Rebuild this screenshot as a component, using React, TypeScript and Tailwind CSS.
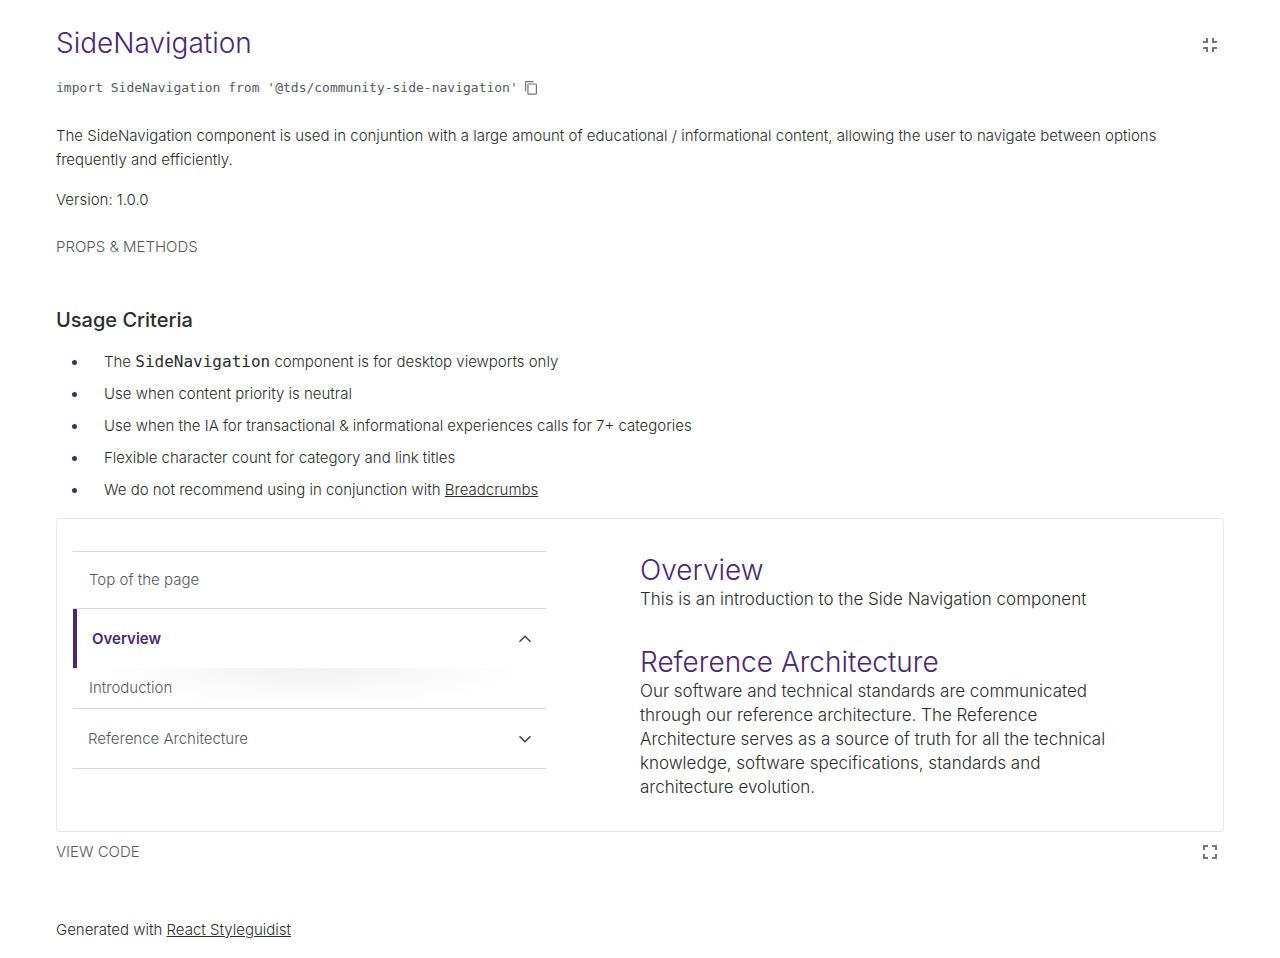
import { useState } from "react";

const criteria = [
  "Use when content priority is neutral",
  "Use when the IA for transactional & informational experiences calls for 7+ categories",
  "Flexible character count for category and link titles",
];

function Chevron({ up }: { up: boolean }) {
  return (
    <svg width="12" height="8" viewBox="0 0 12 8" fill="none" stroke="#4b286d" strokeWidth="1.4" aria-hidden="true">
      <path d={up ? "M0.5 6.8 6 1.3l5.5 5.5" : "M0.5 1.2 6 6.7l5.5-5.5"} />
    </svg>
  );
}

function Bullet({ children }: { children: React.ReactNode }) {
  return (
    <li className="flex items-center gap-[27px] pl-4">
      <span className="size-[5px] shrink-0 rounded-full bg-[#4b286d]" />
      <span>{children}</span>
    </li>
  );
}

function SideNav() {
  const [open, setOpen] = useState(true);
  return (
    <nav aria-label="Side navigation" className="col-span-5 self-start border-b border-[#d8d8d8] text-[#54595f]">
      <a href="#top" className="block border-t border-[#d8d8d8] px-4 py-4">
        Top of the page
      </a>
      <button
        type="button"
        aria-expanded={open}
        onClick={() => setOpen(!open)}
        className="flex h-[60px] w-full items-center justify-between border-t border-[#d8d8d8] text-left font-semibold text-[#4b286d]"
      >
        <span className="flex h-full items-center border-l-4 border-[#4b286d] pl-[15px]">Overview</span>
        <span className="pr-[15px]">
          <Chevron up={open} />
        </span>
      </button>
      {open && (
        <a
          href="#introduction"
          className="block bg-[radial-gradient(ellipse_45%_95%_at_50%_0%,#f1f1f1,#ffffff)] px-4 py-2"
        >
          Introduction
        </a>
      )}
      <button
        type="button"
        aria-expanded="false"
        className="flex h-[60px] w-full items-center justify-between border-t border-[#d8d8d8] px-[15px] text-left"
      >
        Reference Architecture
        <Chevron up={false} />
      </button>
    </nav>
  );
}

export default function App() {
  return (
    <main className="px-14 pt-6 pb-4 font-['Inter',sans-serif] text-[15px] leading-6 font-light text-[#2a2c2e]">
      <header className="flex items-center justify-between">
        <h1 className="pb-0.5 text-[28px] leading-[38px] text-[#4b286d]">SideNavigation</h1>
        <button type="button" aria-label="Show all components" className="mt-0.5 mr-[7px]">
          <svg width="14" height="14" viewBox="0 0 14 14" fill="none" stroke="#757575" strokeWidth="2" aria-hidden="true">
            <path d="M4 0v4H0M10 0v4h4M0 10h4v4M14 10h-4v4" />
          </svg>
        </button>
      </header>
      <div className="mt-3 flex items-center gap-[7px] font-['DejaVu_Sans_Mono',monospace] text-[13px] font-normal text-[#54595f]">
        <span>import SideNavigation from '@tds/community-side-navigation'</span>
        <button type="button" aria-label="Copy import">
          <svg width="12" height="14" viewBox="0 0 12 14" fill="none" stroke="#757575" strokeWidth="1.2" aria-hidden="true">
            <path d="M0.6 10.3V1.4Q.6.6 1.4.6H8.5" />
            <rect x="2.9" y="3" width="8.5" height="10.2" rx="0.7" />
          </svg>
        </button>
      </div>

      <p className="mt-6">
        The SideNavigation component is used in conjuntion with a large amount of educational / informational content,
        allowing the user to navigate between options frequently and efficiently.
      </p>
      <p className="mt-4">Version: 1.0.0</p>
      <button type="button" className="mt-[23px] block text-[#54595f]">
        PROPS &amp; METHODS
      </button>

      <h2 className="mt-[47px] text-xl leading-7 font-medium">Usage Criteria</h2>
      <ul className="mt-4 flex flex-col gap-2">
        <Bullet>
          The <code className="font-['DejaVu_Sans_Mono',monospace] text-base leading-6 font-normal">SideNavigation</code>{" "}
          component is for desktop viewports only
        </Bullet>
        {criteria.map((text) => (
          <Bullet key={text}>{text}</Bullet>
        ))}
        <Bullet>
          We do not recommend using in conjunction with{" "}
          <a href="#breadcrumbs" className="underline">
            Breadcrumbs
          </a>
        </Bullet>
      </ul>

      <section className="mt-4 grid grid-cols-12 rounded-[3px] border border-[#e8e8e8] px-4 py-8">
        <SideNav />
        <div className="col-span-5 col-start-7 flex flex-col gap-8 text-[17px] leading-6">
          <article>
            <h3 className="pt-[3px] pb-px text-[28px] leading-8 text-[#4b286d]">Overview</h3>
            <p>This is an introduction to the Side Navigation component</p>
          </article>
          <article>
            <h3 className="pt-[3px] pb-px text-[28px] leading-8 text-[#4b286d]">Reference Architecture</h3>
            <p>
              Our software and technical standards are communicated through our reference architecture. The Reference
              Architecture serves as a source of truth for all the technical knowledge, software specifications,
              standards and architecture evolution.
            </p>
          </article>
        </div>
      </section>
      <div className="mt-2 flex items-center justify-between">
        <button type="button" className="text-[#54595f]">
          VIEW CODE
        </button>
        <button type="button" aria-label="Open isolated" className="mr-[7px]">
          <svg width="14" height="14" viewBox="0 0 14 14" fill="none" stroke="#757575" strokeWidth="2" aria-hidden="true">
            <path d="M5 1H1v4M9 1h4v4M1 9v4h4M13 9v4H9" />
          </svg>
        </button>
      </div>
      <footer className="mt-[54px]">
        Generated with{" "}
        <a href="#styleguidist" className="underline">
          React Styleguidist
        </a>
      </footer>
    </main>
  );
}
